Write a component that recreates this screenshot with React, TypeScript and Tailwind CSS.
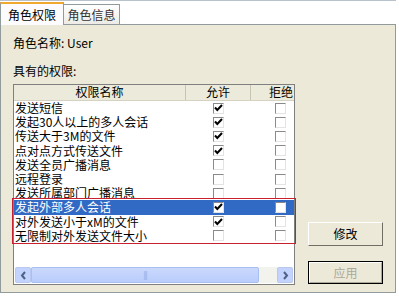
const font = { fontFamily: '"Noto Sans CJK SC", "Liberation Sans", sans-serif' };

const rows = [
  { name: "发送短信", allow: true },
  { name: "发起30人以上的多人会话", allow: true },
  { name: "传送大于3M的文件", allow: true },
  { name: "点对点方式传送文件", allow: true },
  { name: "发送全员广播消息", allow: false },
  { name: "远程登录", allow: false },
  { name: "发送所属部门广播消息", allow: false },
  { name: "发起外部多人会话", allow: true, selected: true },
  { name: "对外发送小于xM的文件", allow: true },
  { name: "无限制对外发送文件大小", allow: false },
];

function Check({ on }: { on: boolean }) {
  return (
    <span className="w-[11px] h-[11px] bg-white border border-t-[#8a8a8a] border-l-[#8a8a8a] border-r-[#e4e4e4] border-b-[#e4e4e4] flex items-center justify-center">
      {on && (
        <svg width="9" height="8" viewBox="0 0 9 8">
          <path d="M1 3.5 L3.3 6 L8 1" stroke="#000" strokeWidth="2" fill="none" />
        </svg>
      )}
    </span>
  );
}

function Arrow({ dir }: { dir: "l" | "r" }) {
  return (
    <svg width="7" height="9" viewBox="0 0 7 9">
      <path
        d={dir === "l" ? "M5 1 L2 4.5 L5 8" : "M2 1 L5 4.5 L2 8"}
        stroke="#4d6185"
        strokeWidth="2"
        fill="none"
      />
    </svg>
  );
}

export default function App() {
  return (
    <div className="w-[399px] h-[300px] bg-white relative overflow-hidden text-[12px] text-black" style={font}>
      <div className="h-[24px] flex items-end border-t border-[#b8c2cc] w-[396px]">
        <div className="relative z-10 w-[64px] h-[23px] -mb-px bg-[#fcfcfe] border-t-2 border-t-[#f0a830] border-x border-x-[#919b9c] flex items-center justify-center leading-[14px]">
          角色权限
        </div>
        <div className="w-[56px] h-[20px] bg-gradient-to-b from-white to-[#ecebe6] border-t border-r border-[#919b9c] flex items-center justify-center text-[#333] leading-[14px]">
          角色信息
        </div>
      </div>

      <div className="w-[396px] h-[269px] bg-[#ece9d8] border border-[#919b9c] pl-[12px] pt-[11px]">
        <div className="leading-[14px]">角色名称: User</div>
        <div className="leading-[14px] mt-[14px]">具有的权限:</div>

        <div className="flex mt-[6px]">
          <div className="w-[282px] h-[201px] bg-white border border-[#7f7f7f] flex flex-col overflow-hidden">
            <div className="h-[16px] flex bg-[#ebeadb] border-b border-[#d6d2c2] shrink-0 leading-[14px]">
              <div className="w-[172px] shrink-0 text-center border-r border-[#c7c5b2]">权限名称</div>
              <div className="w-[65px] shrink-0 text-center border-r border-[#c7c5b2]">允许</div>
              <div className="w-[43px] shrink-0 text-right pr-[1px]">拒绝</div>
            </div>
            <div className="flex-1">
              {rows.map((r) => (
                <div
                  key={r.name}
                  className={`h-[14.2px] flex items-center ${r.selected ? "bg-[#316ac5] text-white" : ""}`}
                >
                  <div className="w-[172px] shrink-0 pl-[1px] whitespace-nowrap leading-[14px]">{r.name}</div>
                  <div className="w-[65px] shrink-0 flex justify-center">
                    <Check on={r.allow} />
                  </div>
                  <div className="w-[43px] shrink-0 flex justify-start pl-[24px]">
                    <Check on={false} />
                  </div>
                </div>
              ))}
            </div>
            <div className="h-[16px] flex shrink-0 bg-[#f3f3ee] mb-px mx-px">
              <div className="w-[16px] h-[16px] bg-[#c3d3fd] border border-[#b7c9f0] rounded-[2px] flex items-center justify-center">
                <Arrow dir="l" />
              </div>
              <div className="w-[228px] h-[16px] bg-gradient-to-b from-[#cad8fc] to-[#b9cdfb] border border-[#a9bff0] rounded-[2px] flex items-center justify-center">
                <span className="text-[8px] text-[#8fa7e0] leading-none tracking-[-1px]">|||</span>
              </div>
              <div className="flex-1" />
              <div className="w-[16px] h-[16px] bg-[#c3d3fd] border border-[#b7c9f0] rounded-[2px] flex items-center justify-center">
                <Arrow dir="r" />
              </div>
            </div>
          </div>

          <div className="ml-[13px] flex flex-col">
            <div className="mt-[138px] w-[75px] h-[24px] border border-t-white border-l-white border-r-[#716f64] border-b-[#716f64] flex items-center justify-center">
              修改
            </div>
            <div className="mt-[15px] w-[75px] h-[23px] border border-black">
              <div className="h-full border border-t-white border-l-white border-r-[#aca899] border-b-[#aca899] flex items-center justify-center text-[#aca899]">
                应用
              </div>
            </div>
          </div>
        </div>
      </div>

      <div className="absolute left-[12px] top-[198px] w-[284px] h-[46px] border border-[#c8202f]" />
    </div>
  );
}
